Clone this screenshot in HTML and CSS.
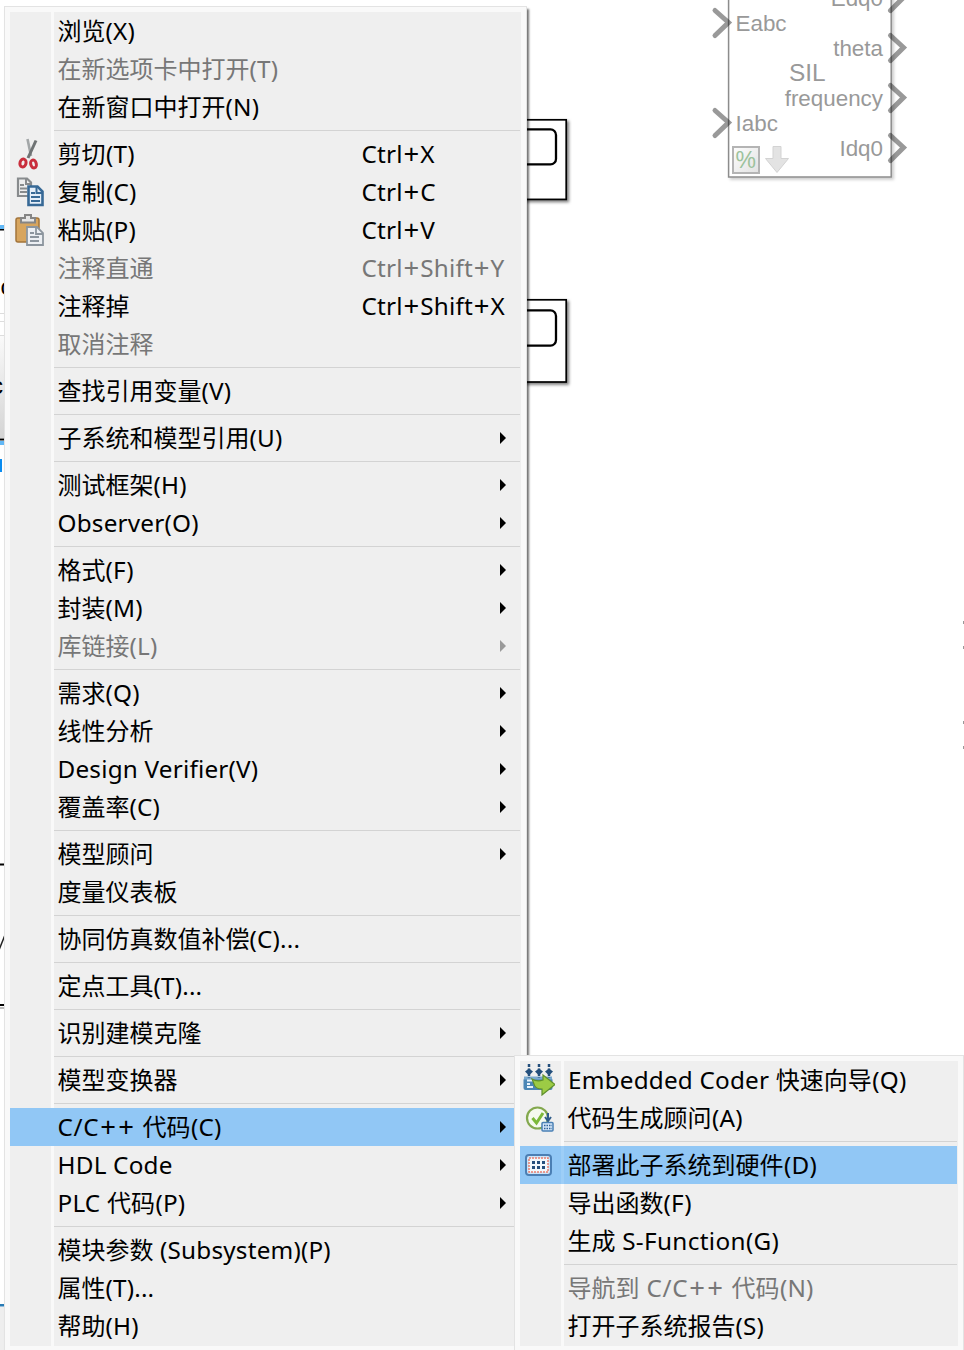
FILE: index.html
```html
<!DOCTYPE html>
<html lang="zh-CN">
<head>
<meta charset="utf-8">
<title>模型画布</title>
<link rel="stylesheet" href="styles.css">
</head>
<body>
<svg class="canvas" width="964" height="1350" viewBox="0 0 964 1350">
  <defs>
    <linearGradient id="side" x1="0" y1="0" x2="0" y2="1"><stop offset="0" stop-color="#fafafa"/><stop offset="1" stop-color="#d4d4d4"/></linearGradient>
    <linearGradient id="badge" x1="0" y1="0" x2="1" y2="1"><stop offset="0" stop-color="#fdfdfd"/><stop offset="1" stop-color="#e2e2e2"/></linearGradient>
    <filter id="soft" x="-10%" y="-10%" width="125%" height="125%"><feDropShadow dx="2" dy="2" stdDeviation="1.5" flood-color="#000" flood-opacity=".5"/></filter>
    <filter id="faint" x="-10%" y="-10%" width="125%" height="125%"><feDropShadow dx="2" dy="2" stdDeviation="1.5" flood-color="#000" flood-opacity=".2"/></filter>
  </defs>
  <g class="scope">
    <g filter="url(#soft)"><rect x="480" y="119.800" width="86.200" height="79.600"/></g>
    <rect class="screen" x="480" y="129.400" width="76" height="35" rx="5.500"/>
    <g filter="url(#soft)"><rect x="480" y="299.800" width="86.200" height="82.200"/></g>
    <rect class="screen" x="480" y="310.400" width="76" height="35.200" rx="5.500"/>
  </g>
  <rect x="728.600" y="-20" width="162.600" height="197" fill="#fff" stroke="#8c8c8c" stroke-width="1.500" filter="url(#faint)"/>
  <g class="port">
    <path d="M715 10.500 728.500 22.500 715 35.500"/><path d="M715 110.500 728.500 122.500 715 135.500"/>
    <path d="M890.500-14.500 903.500-2.500 890.500 10.500"/><path d="M890.500 35.500 903.500 47.500 890.500 60.500"/>
    <path d="M890.500 85.500 903.500 97.500 890.500 110.500"/><path d="M890.500 135.500 903.500 147.500 890.500 160.500"/>
  </g>
  <g class="label">
    <text x="735.500" y="31">Eabc</text><text x="735.500" y="131">Iabc</text>
    <text class="end" x="883" y="6">Edq0</text><text class="end" x="883" y="56">theta</text>
    <text class="end" x="883" y="106">frequency</text><text class="end" x="883" y="156">Idq0</text>
    <text class="kind" x="789" y="81">SIL</text>
  </g>
  <rect x="733" y="147" width="26" height="26" fill="url(#badge)" stroke="#b4b4b4" stroke-width="2"/>
  <text class="percent" x="735.500" y="168">%</text>
  <path d="M773 146.500h8v12h7.500L777 172.500 765.500 158.500h7.500z" fill="#e3e3e3" stroke="#d3d3d3"/>
  <path d="M0 225h4v4H0zM0 441h4v4H0z" fill="#62b8f6"/>
  <path d="M0 229h4v1.500H0zM0 438.500h4v2H0zM0 863.500h4v2H0zM0 1004h4v2H0z"/>
  <rect y="336" width="4" height="102" fill="url(#side)"/>
  <path d="M0 313.500h4M0 321.500h4M0 335.500h4" stroke="#ddd"/>
  <rect y="459" width="2" height="13" fill="#0a8cf0"/>
  <text x="0.500" y="295" class="clip">c</text><text x="-9" y="394" class="clip">c</text>
  <path d="M-1 950 5 935" stroke="#222" stroke-width="1.500"/>
  <path d="M0 1007h4v2H0z" fill="#bbb"/>
  <rect y="1304" width="4" height="2.500" fill="#287bb5"/><rect y="1307" width="4" height="43" fill="#eee"/>
  <path d="M963 621h1v3h-1zM963 646h1v3h-1zM963 721h1v3h-1zM963 746h1v3h-1z" fill="#999"/>
</svg>

<nav class="menu main">
  <div class="item">浏览<span>(X)</span></div>
  <div class="item off">在新选项卡中打开<span>(T)</span></div>
  <div class="item">在新窗口中打开<span>(N)</span></div>
  <hr>
  <div class="item"><svg class="icon" viewBox="0 0 32 32"><path d="M14.500 1 18 18" stroke="#a3a7a8" stroke-width="2.600"/><path d="M23 2.500 15 20" stroke="#6f7374" stroke-width="3"/><ellipse cx="10" cy="25" rx="3" ry="4" transform="rotate(15 10 25)" fill="none" stroke="#c92e3c" stroke-width="3"/><ellipse cx="20.500" cy="26" rx="2.800" ry="4" transform="rotate(-15 20.500 26)" fill="none" stroke="#c92e3c" stroke-width="3"/></svg>剪切<span>(T)</span><kbd>Ctrl<i>+</i>X</kbd></div>
  <div class="item"><svg class="icon" viewBox="0 0 32 32"><path d="M5 2.500h9l4 4V20H5z" fill="#eee" stroke="#888b8d" stroke-width="2.200"/><path d="M13 3v5h5M7 9h4M7 12.500h7M7 16h7" fill="none" stroke="#888b8d" stroke-width="2"/><path d="M15.500 10.500h9l5 5V29h-14z" fill="#e4eef8" stroke="#376996" stroke-width="2.600"/><path d="M23.500 11v6h6M18 17h4M18 21h9M18 25h9" fill="none" stroke="#376996" stroke-width="2"/></svg>复制<span>(C)</span><kbd>Ctrl<i>+</i>C</kbd></div>
  <div class="item"><svg class="icon" viewBox="0 0 32 32"><rect x="3" y="4" width="23" height="24" rx="2" fill="#d7a55e" stroke="#a2743a" stroke-width="1.500"/><path d="M8 8.500V4h4V1h6v3h4v4.500z" fill="#e6e6e6" stroke="#858585" stroke-width="2"/><path d="M14 13h10l6 6v12H14z" fill="#eceff3" stroke="#8c959e" stroke-width="1.800"/><path d="M23 13v7h7M17 19h4M17 23h9M17 27h9" fill="none" stroke="#8c959e" stroke-width="1.800"/></svg>粘贴<span>(P)</span><kbd>Ctrl<i>+</i>V</kbd></div>
  <div class="item off">注释直通<kbd>Ctrl<i>+</i>Shift<i>+</i>Y</kbd></div>
  <div class="item">注释掉<kbd>Ctrl<i>+</i>Shift<i>+</i>X</kbd></div>
  <div class="item off">取消注释</div>
  <hr>
  <div class="item">查找引用变量<span>(V)</span></div>
  <hr>
  <div class="item sub">子系统和模型引用<span>(U)</span></div>
  <hr>
  <div class="item sub">测试框架<span>(H)</span></div>
  <div class="item sub"><span>Observer(O)</span></div>
  <hr>
  <div class="item sub">格式<span>(F)</span></div>
  <div class="item sub">封装<span>(M)</span></div>
  <div class="item sub off">库链接<span>(L)</span></div>
  <hr>
  <div class="item sub">需求<span>(Q)</span></div>
  <div class="item sub">线性分析</div>
  <div class="item sub"><span>Design Verifier(V)</span></div>
  <div class="item sub">覆盖率<span>(C)</span></div>
  <hr>
  <div class="item sub">模型顾问</div>
  <div class="item">度量仪表板</div>
  <hr>
  <div class="item">协同仿真数值补偿<span>(C)...</span></div>
  <hr>
  <div class="item">定点工具<span>(T)...</span></div>
  <hr>
  <div class="item sub">识别建模克隆</div>
  <hr>
  <div class="item sub">模型变换器</div>
  <hr>
  <div class="item sub active"><span class="wide">C/C<i>+</i><i>+</i> </span>代码<span>(C)</span></div>
  <div class="item sub"><span>HDL Code</span></div>
  <div class="item sub"><span>PLC </span>代码<span>(P)</span></div>
  <hr>
  <div class="item">模块参数<span> (Subsystem)(P)</span></div>
  <div class="item">属性<span>(T)...</span></div>
  <div class="item">帮助<span>(H)</span></div>
</nav>

<nav class="menu flyout">
  <div class="item"><svg class="icon" viewBox="0 0 32 32"><rect x="0.500" y="14" width="29" height="12" rx="2" fill="#4b86b5"/><path d="M1 12.500h28v3H1z" fill="#79a9cf"/><path d="M6 0v14M16 0v14M26 0v14" stroke="#244f7c" stroke-width="2.500" stroke-dasharray="3 1.500"/><path d="M2 7.500 6 4.500l4 3-4 4zM12 7.500l4-3 4 3-4 4zM22 7.500l4-3 4 3-4 4z" fill="#244f7c"/><path d="M4 16.500h6M4 20h3M4 23h6" stroke="#e9f3fb" stroke-width="1.800"/><path d="M9 15q5 3 11 1v-5l12 9.500-13 10.500v-6q-7 0-8-5z" fill="#9ccb45" stroke="#5f8f2c" stroke-width="1.200"/></svg><span>Embedded Coder </span>快速向导<span>(Q)</span></div>
  <div class="item"><svg class="icon" viewBox="0 0 32 32"><circle cx="14.500" cy="16" r="10.500" fill="#f5faef" stroke="#83a84e" stroke-width="2.200"/><path d="M9.500 16l4 5 6.500-10" fill="none" stroke="#7cb93a" stroke-width="3"/><path d="M25 11v8M22 15l3 4 3-4" fill="none" stroke="#2f5c8a" stroke-width="2"/><rect x="19" y="20.500" width="11" height="8.500" rx="1" fill="#d3e6f8" stroke="#4a80b5" stroke-width="1.500"/><path d="M21 23.500h8M21 26.500h8" stroke="#2f6299" stroke-width="1.500" stroke-dasharray="1.500 1"/></svg>代码生成顾问<span>(A)</span></div>
  <hr>
  <div class="item active"><svg class="icon" viewBox="0 0 32 32"><rect x="3" y="6" width="25" height="20" rx="3" fill="#cde4f8" stroke="#4b7fb4" stroke-width="2"/><rect x="6" y="9" width="19" height="14" fill="#f3f8fc" stroke="#e77e6d" stroke-width="1.500" stroke-dasharray="2 1"/><path d="M9 13.500h13.500M9 18.500h13.500" stroke="#264f7d" stroke-width="3" stroke-dasharray="3 2"/></svg>部署此子系统到硬件<span>(D)</span></div>
  <div class="item">导出函数<span>(F)</span></div>
  <div class="item">生成<span class="name"> S-Function(G)</span></div>
  <hr>
  <div class="item off">导航到<span class="wide"> C/C<i>+</i><i>+</i> </span>代码<span>(N)</span></div>
  <div class="item">打开子系统报告<span>(S)</span></div>
</nav>
</body>
</html>
```
FILE: styles.css
```css
body {
  margin: 0;
  width: 964px;
  height: 1350px;
  position: relative;
  overflow: hidden;
  background: #fff;
  font-family: "Noto Sans", "Noto Sans CJK SC", sans-serif;
}
.canvas { position: absolute; left: 0; top: 0; }
.scope rect { fill: #fff; stroke: #000; stroke-width: 1.7; }
.scope .screen { stroke-width: 2.3; }
.port path { fill: none; stroke: #000; stroke-opacity: .4; stroke-width: 5; stroke-linecap: round; }
.label { font: 22.4px "Liberation Sans", sans-serif; fill: #999; }
.label .end { text-anchor: end; }
.label .kind { font-size: 24.4px; }
.percent { font: 23px "Liberation Sans", sans-serif; fill: #9cc29c; }
.clip { font: 24px "Liberation Sans", sans-serif; }

.menu {
  position: absolute;
  box-sizing: border-box;
  border: 1px solid #e3e3e3;
  padding: 5px;
  background: linear-gradient(#f9f9f9, #f9f9f9) 41px 0 / 3px 100% no-repeat content-box, #efefef;
  box-shadow: inset 0 0 0 5px #f9f9f9;
}
.main {
  left: 4px;
  top: 6px;
  width: 523px;
  height: 1346px;
  box-shadow: inset 0 0 0 5px #f9f9f9, 2px 3px 2px rgba(0, 0, 0, .55);
}
.flyout { left: 514px; top: 1055px; width: 450px; height: 297px; }
.menu hr { height: 1px; margin: 4px 1px 4px 44px; border: 0; background: #d3d3d3; }
.item {
  position: relative;
  display: flex;
  align-items: flex-start;
  height: 38px;
  box-sizing: border-box;
  margin-right: 1px;
  padding-left: 47.5px;
  color: #000;
  font: 24px/36px "Noto Sans CJK SC", sans-serif;
  white-space: pre;
}
.item span, .item kbd { font: 24.3px/38px "Noto Sans", sans-serif; letter-spacing: .2px; }
.item span:not(:first-child) { margin-left: .5px; }
.item .wide { letter-spacing: .7px; }
.item .name { letter-spacing: .35px; }
.item kbd { position: absolute; left: 351.5px; top: 0; }
.item i { font-style: normal; font-size: 27.5px; line-height: 0; vertical-align: -1px; padding: 0 .8px; }
.off { color: #777; }
.active { background: #91c7f5; }
.flyout .active { background: linear-gradient(#9dcef7, #9dcef7) 41px 0 / 3px 100% no-repeat #91c7f5; }
.icon { position: absolute; left: 3px; top: 3px; width: 32px; height: 32px; }
.sub::after {
  content: "";
  position: absolute;
  right: 14px;
  top: 13px;
  border-left: 6px solid #000;
  border-top: 6px solid transparent;
  border-bottom: 6px solid transparent;
}
.sub.off::after { border-left-color: #999; }
```
